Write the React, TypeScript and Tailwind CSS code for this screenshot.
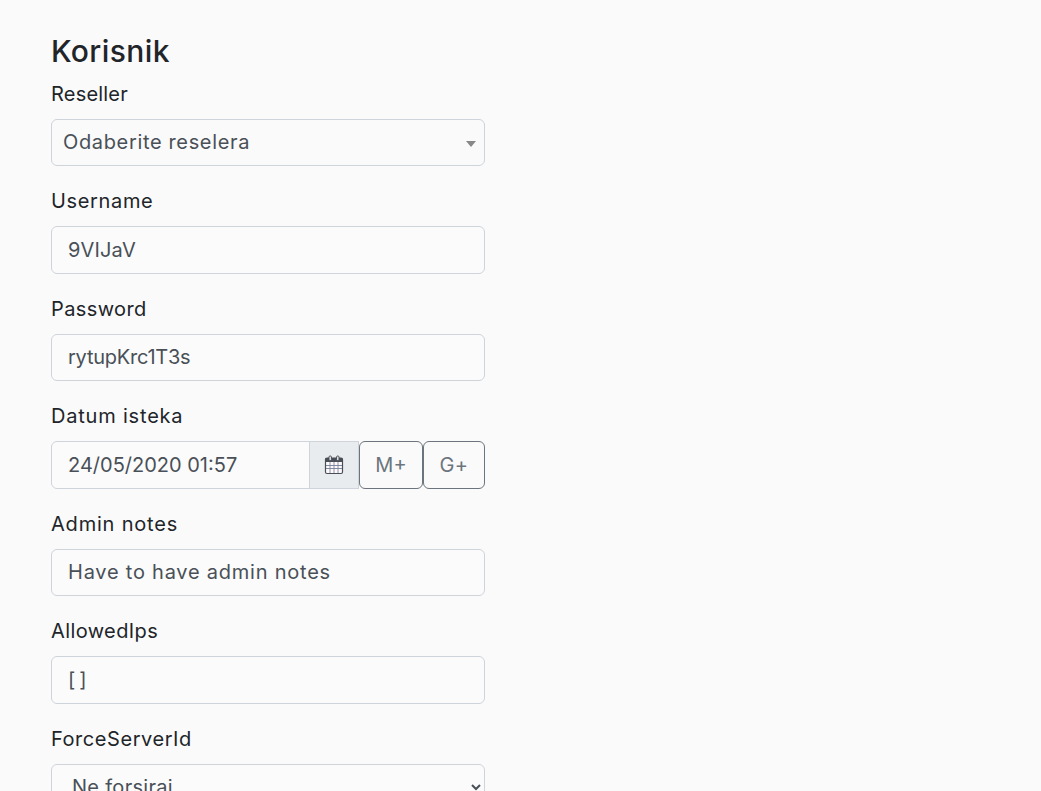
import React from 'react';

const font = { fontFamily: '"Inter", "Open Sans", sans-serif' };

const Label = ({ children, className }: { children: React.ReactNode; className: string }) => (
  <label className={`block h-[27px] text-[20px] leading-[27px] text-[#212529] mb-[11px] ${className}`}>{children}</label>
);

const TextInput = ({ value, className }: { value: string; className: string }) => (
  <input
    readOnly
    value={value}
    className={`block w-full h-[47.5px] px-4 text-[20px] text-[#495057] bg-[#fbfbfc] border border-[#ced4da] rounded-[6px] outline-none ${className}`}
  />
);

const CalendarIcon = () => (
  <svg width="20" height="20" viewBox="0 0 20 20" fill="none">
    <rect x="1.5" y="3" width="17" height="15.5" rx="1.5" fill="#fbfbfd" stroke="#4a4f57" strokeWidth="1.2" />
    <rect x="1.5" y="3" width="17" height="4" fill="#4a4f57" />
    <rect x="5" y="1" width="2.4" height="4.5" rx="1" fill="#eceef1" stroke="#4a4f57" strokeWidth="1" />
    <rect x="12.6" y="1" width="2.4" height="4.5" rx="1" fill="#eceef1" stroke="#4a4f57" strokeWidth="1" />
    <path d="M2 10.5h16M2 13.5h16" stroke="#6f7f96" strokeWidth="0.9" />
    <path d="M6 7v11M10 7v11M14 7v11" stroke="#8a7f96" strokeWidth="0.9" />
  </svg>
);

export default function App() {
  return (
    <div className="h-screen overflow-hidden bg-[#fafafb] pl-[51px] pt-[29.5px]" style={font}>
      <div className="w-[434px]">
        <h2 className="text-[30px] leading-[42px] font-medium tracking-[0.4px] text-[#212529] mb-[9px]">Korisnik</h2>

        <div className="mb-[22.5px]">
          <Label className="tracking-[0.2px]">Reseller</Label>
          <div className="relative h-[47px] border border-[#ced4da] rounded-[6px] pl-[11px] flex items-center text-[20px] tracking-[0.65px] text-[#495057]">
            Odaberite reselera
            <span className="absolute right-[8px] top-[21px] w-0 h-0 border-x-[5px] border-x-transparent border-t-[6px] border-t-[#888888]" />
          </div>
        </div>

        <div className="mb-[22px]">
          <Label className="tracking-[0.65px]">Username</Label>
          <TextInput value="9VIJaV" className="tracking-[0.2px]" />
        </div>

        <div className="mb-[22px]">
          <Label className="tracking-[0.4px]">Password</Label>
          <TextInput value="rytupKrc1T3s" className="tracking-[-0.25px]" />
        </div>

        <div className="mb-[22px]">
          <Label className="tracking-[0.8px]">Datum isteka</Label>
          <div className="flex h-[47.5px]">
            <input
              readOnly
              value="24/05/2020 01:57"
              className="w-[259px] min-w-0 px-4 text-[20px] text-[#495057] bg-[#fbfbfc] border border-[#ced4da] rounded-l-[6px] outline-none"
            />
            <span className="w-[50px] -ml-px flex items-center justify-center bg-[#e9ecef] border border-[#ced4da]">
              <CalendarIcon />
            </span>
            <button className="w-[64px] text-[20px] text-[#6c757d] border border-[#6c757d] rounded-[6px]">M+</button>
            <button className="w-[62px] text-[20px] tracking-[0.5px] text-[#6c757d] border border-[#6c757d] rounded-[6px]">G+</button>
          </div>
        </div>

        <div className="mb-[22px]">
          <Label className="tracking-[0.8px]">Admin notes</Label>
          <TextInput value="Have to have admin notes" className="tracking-[0.77px]" />
        </div>

        <div className="mb-[22px]">
          <Label className="tracking-[0.4px]">AllowedIps</Label>
          <TextInput value="[ ]" className="tracking-[-0.8px]" />
        </div>

        <div>
          <Label className="tracking-[0.55px]">ForceServerId</Label>
          <select className="block w-full h-[47.5px] px-4 text-[20px] tracking-[0.3px] text-[#495057] bg-[#fbfbfc] border border-[#ced4da] rounded-[6px] outline-none">
            <option>Ne forsiraj</option>
          </select>
        </div>
      </div>
    </div>
  );
}
